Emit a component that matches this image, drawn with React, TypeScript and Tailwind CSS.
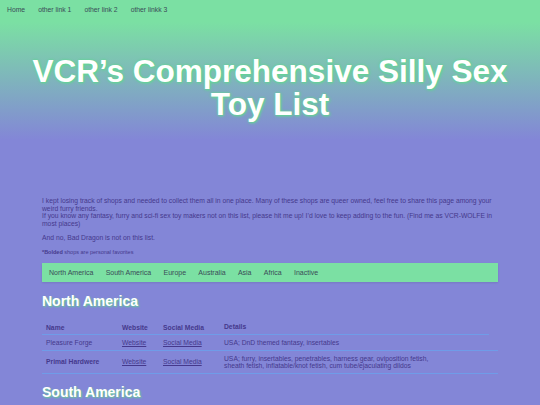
const navLinks = ["Home", "other link 1", "other link 2", "other linkk 3"];
const regions = ["North America", "South America", "Europe", "Australia", "Asia", "Africa", "Inactive"];

const shops = [
  { name: "Pleasure Forge", fav: false, details: "USA; DnD themed fantasy, insertables" },
  {
    name: "Primal Hardwere",
    fav: true,
    details:
      "USA; furry, insertables, penetrables, harness gear, oviposition fetish, sheath fetish, inflatable/knot fetish, cum tube/ejaculating dildos",
  },
];

export default function App() {
  return (
    <div className="min-h-[405px] bg-[#8386d7] font-['Liberation_Sans',Arial,sans-serif] text-[#45398c]">
      {/* header */}
      <header className="h-[150px] bg-[linear-gradient(to_bottom,#7be0a3_22px,#8386d7_140px)]">
        <nav className="flex gap-[11px] px-[7px] pt-[5px] text-[6.8px] text-[#3a4b57]">
          {navLinks.map((l) => (
            <a key={l} href="#" className="mr-[2px]">
              {l}
            </a>
          ))}
        </nav>
        <h1 className="mt-[40px] text-center text-[31.5px] font-bold leading-[33px] text-white [text-shadow:1px_1px_3px_#5fd88f,0_0_3px_#5fd88f]">
          VCR’s Comprehensive Silly Sex
          <br />
          Toy List
        </h1>
      </header>

      <main className="mx-auto w-[456px] pt-[47px]">
        <p className="text-[6.75px] leading-[7.6px]">
          I kept losing track of shops and needed to collect them all in one place. Many of these shops are queer owned,
          feel free to share this page among your weird furry friends.
          <br />
          If you know any fantasy, furry and sci-fi sex toy makers not on this list, please hit me up! I’d love to keep
          adding to the fun. (Find me as VCR-WOLFE in most places)
        </p>
        <p className="mt-[7px] text-[6.75px] leading-[8px]">And no, Bad Dragon is not on this list.</p>
        <p className="mt-[7px] text-[5.5px] leading-[7px]">
          <b>*Bolded</b> shops are personal favorites
        </p>

        <div className="mt-[7px] flex h-[19px] items-center gap-[12.3px] bg-[#7be0a3] px-[7px] text-[7px] text-[#3a4b57] shadow-[0_1px_2px_rgba(0,0,0,0.1)]">
          {regions.map((r) => (
            <a key={r} href="#">
              {r}
            </a>
          ))}
        </div>

        <h2 className="mt-[10px] text-[14px] font-bold leading-[18px] text-white [text-shadow:1px_1px_2px_#5fd88f]">
          North America
        </h2>

        <table className="mt-[13px] w-full table-fixed border-collapse text-left text-[6.75px] leading-[7.6px]">
          <thead>
            <tr className="font-bold">
              <th className="w-[76px] border-b-[1.5px] border-[#6f9ce8] px-[4px] pb-[3px] font-bold">Name</th>
              <th className="w-[41px] border-b-[1.5px] border-[#6f9ce8] px-[4px] pb-[3px] font-bold">Website</th>
              <th className="w-[61px] border-b-[1.5px] border-[#6f9ce8] px-[4px] pb-[3px] font-bold">Social Media</th>
              <th className="px-0 pb-0 font-bold">
                <div className="mr-[9px] border-b-[1.5px] border-[#6f9ce8] px-[4px] pb-[3px]">Details</div>
              </th>
            </tr>
          </thead>
          <tbody>
            {shops.map((s) => (
              <tr key={s.name} className="border-b-[1.5px] border-[#6f9ce8]">
                <td className={`px-[4px] py-[3.5px] ${s.fav ? "font-bold" : ""}`}>{s.name}</td>
                <td className="px-[4px] py-[3.5px]">
                  <a href="#" className="underline">
                    Website
                  </a>
                </td>
                <td className="px-[4px] py-[3.5px]">
                  <a href="#" className="underline">
                    Social Media
                  </a>
                </td>
                <td className="py-[3.5px] pl-[4px] pr-[59px]">{s.details}</td>
              </tr>
            ))}
          </tbody>
        </table>

        <h2 className="mt-[9px] text-[14px] font-bold leading-[18px] text-white [text-shadow:1px_1px_2px_#5fd88f]">
          South America
        </h2>
      </main>
    </div>
  );
}
